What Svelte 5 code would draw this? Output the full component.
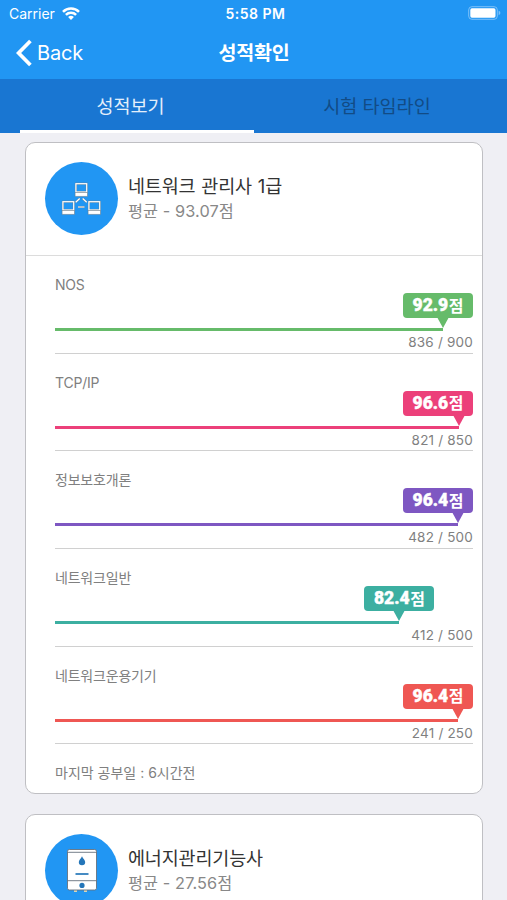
<script>
  const subjects = [
    { name: 'NOS', pct: 92.9, done: '836 / 900', color: '#66bb6a' },
    { name: 'TCP/IP', pct: 96.6, done: '821 / 850', color: '#ec407a' },
    { name: '정보보호개론', pct: 96.4, done: '482 / 500', color: '#7e57c2' },
    { name: '네트워크일반', pct: 82.4, done: '412 / 500', color: '#3cafa1' },
    { name: '네트워크운용기기', pct: 96.4, done: '241 / 250', color: '#ef5753' }
  ];
</script>

<main>
  <div class="status">
    <div class="carrier">
      <span>Carrier</span>
      <svg width="18" height="13" viewBox="0 0 18 13" fill="none" stroke="#fff" stroke-width="2.5">
        <path d="M1 4.800a11.200 11.200 0 0 1 16 0M3.900 7.900a7.200 7.200 0 0 1 10.200 0" />
        <path d="M6.100 10.100a4.100 4.100 0 0 1 5.800 0L9 13z" fill="#fff" stroke="none" />
      </svg>
    </div>
    <span class="clock">5:58 PM</span>
    <svg class="battery" width="33" height="14" viewBox="0 0 33 14">
      <rect x=".7" y=".7" width="28.6" height="12.6" rx="3.2" fill="none" stroke="#7cc0f9" stroke-width="1" />
      <rect x="2.3" y="2.3" width="25.2" height="9.4" rx="1.6" fill="#fff" />
      <path d="M30.6 4.8q1.8.6 1.8 2.2t-1.8 2.2z" fill="#7cc0f9" />
    </svg>
  </div>

  <header>
    <button class="back">
      <svg width="16" height="28" viewBox="0 0 16 28" fill="none" stroke="#fff" stroke-width="3.7">
        <path d="M14.4 2 2.6 14l11.8 12" />
      </svg>
      <span>Back</span>
    </button>
    <h1>성적확인</h1>
    <span></span>
  </header>

  <nav>
    <span class="tab active">성적보기</span>
    <span class="tab">시험 타임라인</span>
  </nav>

  <section class="cards">
    <article>
      <div class="head">
        <div class="circle">
          <svg class="network" width="42" height="36" viewBox="0 0 42 36">
            {#each [[15, 2], [2, 20], [28, 20]] as [x, y]}
              <g transform="translate({x} {y})">
                <rect x=".9" y=".7" width="10.8" height="8.3" fill="#2196f3" stroke="#65839a" stroke-width="2" />
                <rect x=".9" y=".7" width="10.8" height="8.3" fill="none" stroke="#fff" stroke-width="1.2" />
                <path d="M.1 9.5h12.4v3.9H.1z" fill="#fff" stroke="#65727d" stroke-width=".5" />
              </g>
            {/each}
            <path d="m19.700 17.500-4 3.800M22.700 17.500l4 3.800M18 26h6.500" fill="none" stroke="#65839a" stroke-width="2" />
            <path d="m19.700 17.500-4 3.800M22.700 17.500l4 3.800M18 26h6.500" fill="none" stroke="#fff" stroke-width="1.2" />
          </svg>
        </div>
        <div class="info">
          <h2>네트워크 관리사 1급</h2>
          <p>평균 - 93.07점</p>
        </div>
      </div>
      <div class="body">
        {#each subjects as s}
          <div class="subject">
            <div class="name">{s.name}</div>
            <div class="track">
              <div class="bar" style="width:{s.pct}%;background:{s.color}"></div>
              <div class="badge" style="left:min({s.pct}% - 35px, 100% - 70px);background:{s.color}">{s.pct}<b>점</b></div>
              <div class="tip" style="left:{s.pct}%;border-top-color:{s.color}"></div>
            </div>
            <div class="done">{s.done}</div>
          </div>
        {/each}
        <div class="last">마지막 공부일 : 6시간전</div>
      </div>
    </article>

    <article>
      <div class="head">
        <div class="circle">
          <svg width="34" height="46" viewBox="0 0 34 46">
            <path d="M9 41h3v3H9zm10 0h3v3h-3z" fill="#d8d5b8" />
            <rect x="2.5" y="1.5" width="29" height="40.5" rx="1.8" fill="#fff" stroke="#66727e" stroke-width=".9" />
            <path d="M2.5 4.3h29M2.5 32.7h29" stroke="#66727e" stroke-width=".9" />
            <path d="M17 8.2c1 2.4 3.200 3.900 3.200 5.900a3.200 3.200 0 0 1-6.400 0c0-2 2.200-3.500 3.200-5.900z" fill="#2476b9" />
            <path d="M10.500 26h13" stroke="#2476b9" stroke-width="1.700" />
            <circle cx="17" cy="37.400" r="2.600" fill="#2476b9" />
          </svg>
        </div>
        <div class="info">
          <h2>에너지관리기능사</h2>
          <p>평균 - 27.56점</p>
        </div>
      </div>
    </article>
  </section>
</main>

<style>
  :global(body) { margin: 0; overflow: hidden; }
  main {
    width: 507px; height: 900px; overflow: hidden; background: #efeff4;
    font-family: Inter, 'Noto Sans CJK KR', sans-serif;
    display: flex; flex-direction: column;
  }
  main * { box-sizing: border-box; }
  svg { display: block; flex: none; }
  h1, h2, p { margin: 0; font-weight: 400; }
  .status {
    height: 27px; flex: none; background: #2196f3; color: #fff; padding: 0 6px 0 9px;
    display: grid; grid-template-columns: 1fr auto 1fr; align-items: center;
    font-size: 14px; line-height: 27px;
  }
  .carrier { display: flex; align-items: center; gap: 7px; letter-spacing: 0; line-height: 26px; }
  .carrier svg { margin-top: -1px; }
  .clock { font-weight: 600; letter-spacing: .5px; font-size: 14px; padding-left: 1px; line-height: 27px; }
  .battery { justify-self: end; margin-right: 0; margin-top: -1px; }
  header {
    height: 52px; flex: none; background: #2196f3; color: #fff; padding-left: 16px;
    display: grid; grid-template-columns: 1fr auto 1fr; align-items: center;
  }
  .back {
    display: flex; align-items: center; gap: 5px; border: 0; padding: 0; background: none;
    color: #fff; font: 400 20px/28px Inter, sans-serif; letter-spacing: -.2px;
  }
  h1 { font-size: 19.500px; font-weight: 700; line-height: 28px; letter-spacing: -.2px; margin-left: -15px; }
  nav { height: 54px; flex: none; background: #1976d2; display: flex; }
  .tab { flex: 1; line-height: 54px; padding-right: 7px; text-align: center; font-size: 18.500px; color: #124b85; }
  .active { flex: none; width: 234px; margin-left: 20px; padding-right: 13px; color: #e3effb; border-bottom: 3px solid #fff; }
  .cards { display: flex; flex-direction: column; gap: 20px; padding: 9px 24px 0 25px; }
  article { flex: none; background: #fff; border: 1.500px solid #bfbfc3; border-radius: 10px; }
  .head { height: 112px; display: flex; align-items: center; gap: 10px; padding-left: 19px; }
  .circle { width: 73px; height: 73px; margin-top: -1px; border-radius: 50%; background: #2196f3; display: flex; align-items: center; justify-content: center; }
  .network { margin-left: -1px; }
  .info { margin-top: -2px; }
  h2 { font-size: 18.500px; line-height: 26px; color: #333; letter-spacing: -.15px; word-spacing: .8px; }
  p { font-size: 16.300px; line-height: 25px; color: #888; letter-spacing: .1px; }
  .body { height: 538px; border-top: 1px solid #dcdcdc; padding: 0 9px 0 29px; }
  .subject { height: 97.700px; border-bottom: 1.500px solid #d0d0d0; color: #808080; font-size: 14px; }
  .name, .last { height: 58px; line-height: 57px; font-size: 14px; color: #808080; letter-spacing: -.2px; }
  .last { letter-spacing: 0; }
  .track { position: relative; height: 17px; padding-top: 14px; }
  .bar { height: 3px; }
  .badge {
    position: absolute; top: -21px; width: 70px; height: 25px; border-radius: 4px; color: #fff;
    display: flex; justify-content: center; align-items: center; gap: .5px;
    font: 900 17.500px/25px Roboto, sans-serif; -webkit-text-stroke: .4px #fff;
  }
  .badge b { font: 700 16px/25px 'Noto Sans CJK KR', sans-serif; -webkit-text-stroke: 0; margin-top: -1px; }
  .tip { position: absolute; top: 3px; transform: translateX(-50%); border: 6px solid transparent; border-top-width: 11px; border-bottom: 0; }
  .done { text-align: right; line-height: 22px; font-size: 13.500px; letter-spacing: .2px; }
</style>
